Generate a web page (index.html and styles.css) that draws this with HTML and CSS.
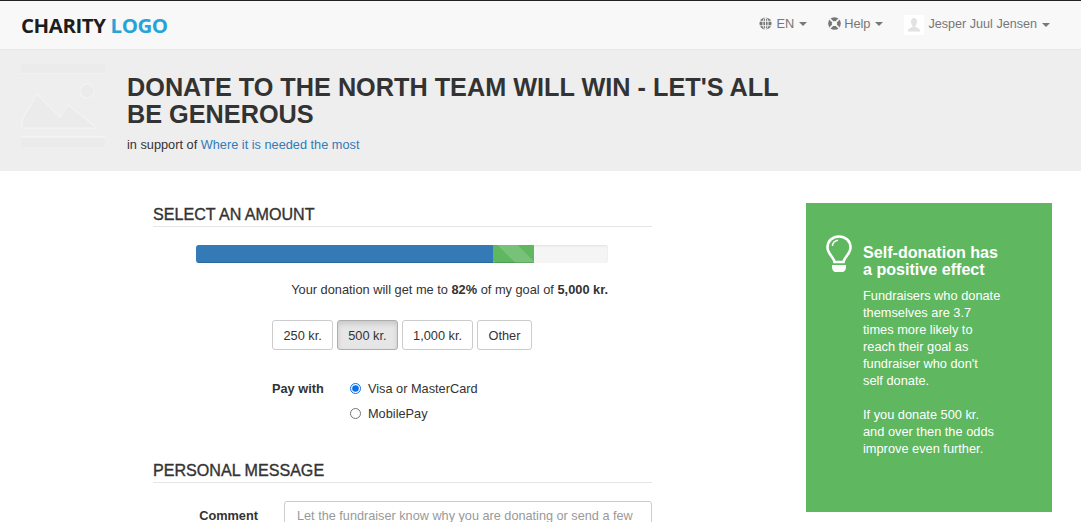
FILE: index.html
```html
<!DOCTYPE html>
<html lang="en">
<head>
<meta charset="utf-8">
<title>Donate</title>
<link rel="stylesheet" href="styles.css">
</head>
<body>
<nav class="navbar">
  <a class="logo" href="#">CHARITY <span class="logo-accent">LOGO</span></a>
  <ul class="nav-items">
    <li class="nav-item">
      <svg class="nav-icon" viewBox="0 0 14 14"><circle cx="7" cy="7" r="6.5" fill="#777"/><g fill="none" stroke="#f8f8f8" stroke-width="1"><ellipse cx="7" cy="7" rx="2.8" ry="6.500"/><path d="M.5 4.600h13M.5 9.400h13M7 .5v13"/></g></svg>
      <span>EN</span><i class="caret"></i>
    </li>
    <li class="nav-item nav-help">
      <svg class="nav-icon" viewBox="0 0 14 14"><circle cx="7" cy="7" r="6.800" fill="#777"/><circle cx="7" cy="7" r="2.800" fill="#f8f8f8"/><g stroke="#f8f8f8" stroke-width="1.800"><path d="M2.200 2.200l3 3M11.800 2.200l-3 3M2.200 11.800l3-3M11.800 11.800l-3-3"/></g></svg>
      <span>Help</span><i class="caret"></i>
    </li>
    <li class="nav-item nav-user">
      <span class="avatar"><svg viewBox="0 0 20 20"><path fill="#e2e2e2" d="M7 6.500C7 4.300 8.300 3 10 3s3 1.300 3 3.500c0 1.700-.8 3.300-1.600 4.200v1.300c1.800.7 4.600 1.500 4.600 3.500v1H4v-1c0-2 2.800-2.800 4.600-3.500v-1.300C7.800 9.800 7 8.200 7 6.500z"/></svg></span>
      <span>Jesper Juul Jensen</span><i class="caret"></i>
    </li>
  </ul>
</nav>

<header class="banner">
  <svg class="placeholder" viewBox="0 0 84 84">
    <rect x="0" y="0" width="84" height="9" fill="#ebebeb"/>
    <rect x="0" y="9" width="84" height="1" fill="#f3f3f3"/>
    <rect x="0" y="72" width="84" height="1.500" fill="#f3f3f3"/>
    <rect x="0" y="74" width="84" height="9" fill="#ebebeb"/>
    <path d="M1 64V56L16 30l23 23 8-12 29 23z" fill="#ebebeb" stroke="#f3f3f3" stroke-width="1.200"/>
    <circle cx="66" cy="27" r="7" fill="#ebebeb" stroke="#f3f3f3" stroke-width="1.200"/>
  </svg>
  <div class="banner-text">
    <h1 class="title">DONATE TO THE NORTH TEAM WILL WIN - LET'S ALL BE GENEROUS</h1>
    <p class="support">in support of <a href="#">Where it is needed the most</a></p>
  </div>
</header>

<main class="content">
  <section class="form-col">
    <h2 class="section-title">SELECT AN AMOUNT</h2>
    <div class="amount-block">
      <div class="progress">
        <div class="bar bar-blue"></div>
        <div class="bar bar-green"></div>
      </div>
      <p class="goal">Your donation will get me to <b>82%</b> of my goal of <b>5,000 kr.</b></p>
      <div class="amounts">
        <button class="amount">250 kr.</button>
        <button class="amount active">500 kr.</button>
        <button class="amount">1,000 kr.</button>
        <button class="amount">Other</button>
      </div>
      <div class="pay">
        <span class="pay-label">Pay with</span>
        <div class="pay-options">
          <label class="radio"><input type="radio" name="pay" checked>Visa or MasterCard</label>
          <label class="radio"><input type="radio" name="pay">MobilePay</label>
        </div>
      </div>
    </div>
    <h2 class="section-title message-title">PERSONAL MESSAGE</h2>
    <div class="comment-row">
      <label class="comment-label" for="comment">Comment</label>
      <textarea class="comment" id="comment" placeholder="Let the fundraiser know why you are donating or send a few words of encouragement"></textarea>
    </div>
  </section>

  <aside class="tip">
    <div class="tip-head">
      <svg class="bulb" viewBox="0 0 26 38"><path d="M8.500 27C8 22 1.500 19 1.500 12.500 1.500 6 6.500 1.500 13 1.500S24.500 6 24.500 12.500C24.500 19 18 22 17.500 27z" fill="none" stroke="#fff" stroke-width="2.600"/><path d="M6.500 11C6.500 8 9 5.500 12 5.200" fill="none" stroke="#fff" stroke-width="1.500"/><path d="M6 30h14v2.500c0 2.500-2 4.500-3.500 4.500h-7C8 37 6 35 6 32.500z" fill="#fff"/></svg>
      <h3 class="tip-title">Self-donation has a positive effect</h3>
    </div>
    <p class="tip-text">Fundraisers who donate themselves are 3.7 times more likely to reach their goal as fundraiser who don't self donate.</p>
    <p class="tip-text">If you donate 500 kr. and over then the odds improve even further.</p>
  </aside>
</main>
</body>
</html>
```
FILE: styles.css
```css
* { box-sizing: border-box; }
html, body { margin: 0; height: 522px; overflow: hidden; }
body { font-family: "Liberation Sans", Arial, sans-serif; font-size: 12.75px; line-height: 17px; color: #333; background: #fff; }

.navbar { height: 50px; border-top: 1px solid #222; border-bottom: 1px solid #e7e7e7; background: #f8f8f8; display: flex; justify-content: space-between; align-items: center; padding: 0 31px 0 21px; }
.logo { font-family: "Open Sans", sans-serif; font-weight: 700; font-size: 20.4px; color: #1d1d1d; text-decoration: none; letter-spacing: -0.4px; }
.logo-accent { color: #27a3d8; }
.nav-items { display: flex; align-items: center; margin: 0; padding: 0; list-style: none; color: #777; }
.nav-item { display: flex; align-items: center; margin-left: 21px; margin-top: -3px; font-size: 12.8px; }
.nav-icon { width: 13px; height: 13px; margin-right: 4px; }
.nav-help .nav-icon { margin-right: 3px; }
.nav-user { margin-top: -1px; font-size: 12.6px; }
.avatar { width: 20px; height: 20px; background: #fff; margin-right: 4px; display: block; }
.avatar svg { display: block; width: 20px; height: 20px; }
.caret { width: 0; height: 0; margin-left: 5px; border-top: 4px solid #777; border-left: 4px solid transparent; border-right: 4px solid transparent; }

.banner { height: 121px; background: #eee; display: flex; align-items: flex-start; padding: 14px 0 0 21px; }
.placeholder { width: 84px; height: 84px; flex: none; }
.banner-text { width: 672px; margin-left: 22px; padding-top: 10px; }
.title { margin: 0; font-size: 25.25px; line-height: 27px; font-weight: 700; color: #333; }
.support { margin: 8px 0 0; }
.support a { color: #337ab7; text-decoration: none; }

.content { display: flex; align-items: flex-start; padding: 32px 0 0 153px; }
.form-col { width: 499px; }
.section-title { margin: 0; padding: 3px 0 3px; font-size: 16.1px; line-height: 17px; font-weight: 400; -webkit-text-stroke: 0.35px #333; color: #333; border-bottom: 1px solid #e5e5e5; }
.amount-block { padding: 18px 44px 0 43px; }
.progress { height: 18px; background: #f5f5f5; border-radius: 3px; display: flex; overflow: hidden; box-shadow: inset 0 1px 2px rgba(0,0,0,.08); }
.bar { height: 100%; box-shadow: inset 0 -1px 0 rgba(0,0,0,.15); }
.bar-blue { width: 297px; background: #337ab7; }
.bar-green { width: 41px; background-color: #5fb760; background-image: linear-gradient(45deg, transparent 25%, rgba(255,255,255,.15) 25%, rgba(255,255,255,.15) 50%, transparent 50%, transparent 75%, rgba(255,255,255,.15) 75%); background-size: 40px 40px; background-position: -15px 0; }
.goal { margin: 18px 0 0; text-align: right; font-size: 12.8px; }
.amounts { display: flex; gap: 3.5px; margin: 22px 0 0 76px; }
.amount { height: 30px; padding: 0 10.5px; font: inherit; color: #333; background: #fff; border: 1px solid #ccc; border-radius: 3px; }
.amount.active { background: #e6e6e6; border-color: #adadad; box-shadow: inset 0 3px 5px rgba(0,0,0,.125); }
.pay { display: flex; margin: 30px 0 0 76px; }
.pay-label { width: 78px; font-weight: 700; }
.pay-options { display: flex; flex-direction: column; gap: 8px; }
.radio { display: flex; align-items: center; }
.radio input { width: 11px; height: 11px; margin: 0 7px 0 0; accent-color: #0b6fe8; }

.message-title { margin-top: 37px; }
.comment-row { display: flex; margin-top: 18px; }
.comment-label { width: 105px; padding-top: 6px; text-align: right; font-weight: 700; flex: none; }
.comment { width: 368px; height: 74px; margin-left: 26px; padding: 6px 12px; font: inherit; font-size: 12.7px; color: #555; border: 1px solid #ccc; border-radius: 3px; resize: none; flex: none; }
.comment::placeholder { color: #999; opacity: 1; }

.tip { width: 246px; height: 309px; margin-left: 154px; padding: 32px 51px 0 20px; background: #5fb760; color: #fff; flex: none; font-size: 12.8px; }
.tip-head { display: flex; align-items: flex-start; }
.bulb { width: 26px; height: 38px; flex: none; margin-right: 11px; }
.tip-title { margin: 9px 0 0; font-size: 16.1px; line-height: 17px; font-weight: 700; }
.tip-text { margin: 9px 0 17px 37px; }
.tip-text + .tip-text { margin-top: 17px; }
```
